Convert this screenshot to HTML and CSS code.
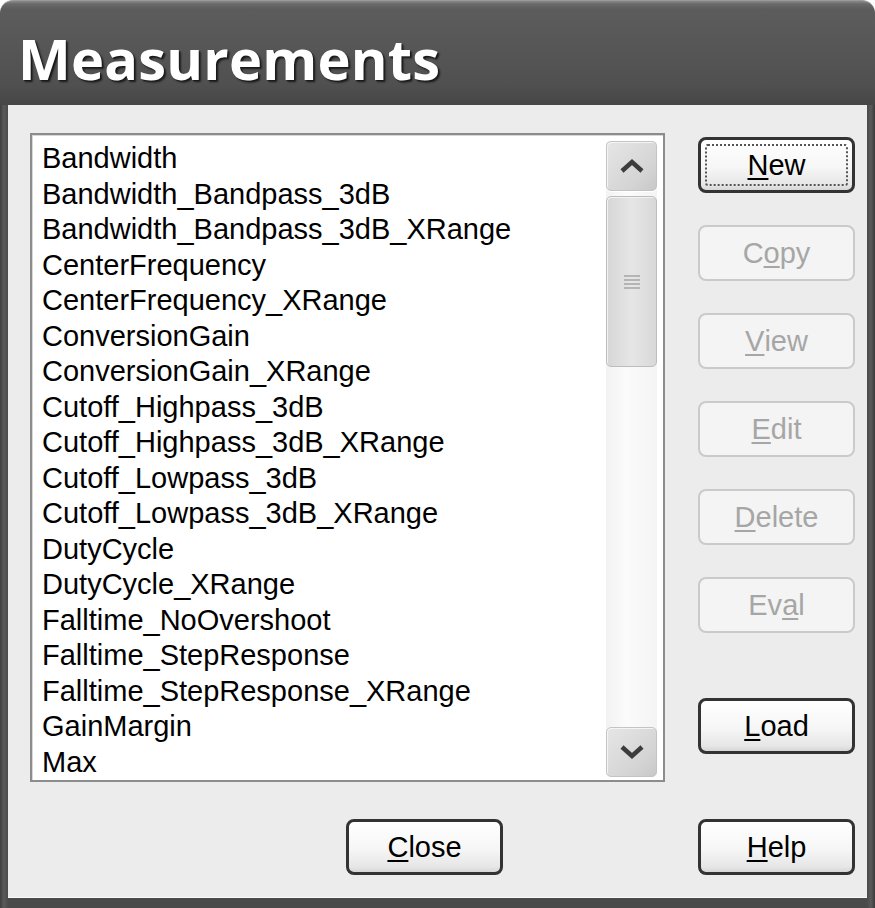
FILE: index.html
```html
<!DOCTYPE html>
<html>
<head>
<meta charset="utf-8">
<link rel="stylesheet" href="styles.css">
</head>
<body>
<div class="window">
  <div class="titlebar"><span class="title">Measurements</span></div>
  <div class="frame">
    <div class="client">
      <div class="listbox">
        <ul class="items">
          <li>Bandwidth</li>
          <li>Bandwidth_Bandpass_3dB</li>
          <li>Bandwidth_Bandpass_3dB_XRange</li>
          <li>CenterFrequency</li>
          <li>CenterFrequency_XRange</li>
          <li>ConversionGain</li>
          <li>ConversionGain_XRange</li>
          <li>Cutoff_Highpass_3dB</li>
          <li>Cutoff_Highpass_3dB_XRange</li>
          <li>Cutoff_Lowpass_3dB</li>
          <li>Cutoff_Lowpass_3dB_XRange</li>
          <li>DutyCycle</li>
          <li>DutyCycle_XRange</li>
          <li>Falltime_NoOvershoot</li>
          <li>Falltime_StepResponse</li>
          <li>Falltime_StepResponse_XRange</li>
          <li>GainMargin</li>
          <li>Max</li>
        </ul>
        <div class="scrollbar">
          <div class="sb-btn">
            <svg width="26" height="16" viewBox="0 0 26 16"><polyline points="3,13 13,4 23,13" fill="none" stroke="#3c3c3c" stroke-width="4.5" stroke-linejoin="miter"/></svg>
          </div>
          <div class="sb-thumb">
            <svg width="18" height="16" viewBox="0 0 18 16"><g stroke="#a9a9a9" stroke-width="1.6"><line x1="1" y1="2" x2="17" y2="2"/><line x1="1" y1="6" x2="17" y2="6"/><line x1="1" y1="10" x2="17" y2="10"/><line x1="1" y1="14" x2="17" y2="14"/></g></svg>
          </div>
          <div class="sb-track"></div>
          <div class="sb-btn">
            <svg width="26" height="16" viewBox="0 0 26 16"><polyline points="3,3 13,12 23,3" fill="none" stroke="#3c3c3c" stroke-width="4.5" stroke-linejoin="miter"/></svg>
          </div>
        </div>
      </div>
      <div class="buttons">
        <div class="btn focus"><span><u>N</u>ew</span></div>
        <div class="btn disabled">C<u>o</u>py</div>
        <div class="btn disabled"><u>V</u>iew</div>
        <div class="btn disabled"><u>E</u>dit</div>
        <div class="btn disabled"><u>D</u>elete</div>
        <div class="btn disabled">Ev<u>a</u>l</div>
        <div class="btn load"><u>L</u>oad</div>
      </div>
      <div class="footer">
        <div class="btn close"><u>C</u>lose</div>
      </div>
      <div class="btn help"><u>H</u>elp</div>
    </div>
  </div>
</div>
</body>
</html>
```

FILE: styles.css
```css
html, body {
  margin: 0;
  padding: 0;
  background: #ffffff;
}

.window {
  width: 875px;
  height: 908px;
  display: flex;
  flex-direction: column;
  overflow: hidden;
}

.titlebar {
  height: 105px;
  box-sizing: border-box;
  padding: 29px 0 0 18px;
  border-radius: 13px 13px 0 0;
  background: linear-gradient(to bottom, #8a8a8a 0px, #6a6a6a 3px, #5c5c5c 8px, #575757 40%, #505050 80%, #464646 100%);
  border-top: 1px solid #9a9a9a;
}

.title {
  display: block;
  font-family: "Open Sans", "DejaVu Sans", sans-serif;
  font-weight: 700;
  font-size: 56px;
  line-height: 56px;
  letter-spacing: 0.2px;
  color: #ffffff;
  text-shadow: 2px 2px 2px #1a1a1a, 1px 1px 0 #2a2a2a;
}

.frame {
  flex: 1;
  background: linear-gradient(to right, #3e3e3e, #5a5a5a 4px, #4a4a4a 8px, #4a4a4a calc(100% - 8px), #5a5a5a calc(100% - 4px), #3a3a3a);
  padding: 0 8px 10px 8px;
  display: flex;
}

.client {
  flex: 1;
  background: #ececec;
  box-sizing: border-box;
  padding: 28px 12px 0 22px;
  display: grid;
  grid-template-columns: 635px 157px;
  grid-template-rows: 649px 56px;
  column-gap: 33px;
  row-gap: 37px;
  border-bottom: 1px solid #fafafa;
}

.listbox {
  border: 2px solid #8c8c8c;
  background: #ffffff;
  display: flex;
  overflow: hidden;
  box-shadow: inset 1px 1px 0 #d8d8d8;
}

.items {
  flex: 1;
  list-style: none;
  margin: 0;
  padding: 6px 0 0 10px;
  overflow: hidden;
  font-family: "Liberation Sans", Arial, sans-serif;
  font-size: 29px;
  line-height: 35.5px;
  color: #000000;
  white-space: nowrap;
}

.scrollbar {
  width: 51px;
  margin: 6px 6px 3px 0;
  display: flex;
  flex-direction: column;
  background: linear-gradient(to right, #f2f2f2, #fbfbfb 40%, #f4f4f4);
  border-radius: 3px;
}

.sb-btn {
  height: 50px;
  box-sizing: border-box;
  border: 1px solid #c4c4c4;
  border-radius: 5px;
  background: linear-gradient(to bottom right, #e6e6e6, #d4d4d4 70%, #c8c8c8);
  box-shadow: inset 1px 1px 0 #f4f4f4, 0 1px 0 #ffffff;
  display: flex;
  align-items: center;
  justify-content: center;
}

.sb-thumb {
  margin-top: 5px;
  height: 171px;
  box-sizing: border-box;
  border: 1px solid #bdbdbd;
  border-radius: 5px;
  background: linear-gradient(to right, #d6d6d6, #e6e6e6 50%, #d8d8d8);
  box-shadow: inset 1px 1px 0 #f2f2f2;
  display: flex;
  align-items: center;
  justify-content: center;
}

.sb-track {
  flex: 1;
}

.buttons {
  display: flex;
  flex-direction: column;
  padding-top: 4px;
  gap: 32px;
}

.btn {
  height: 56px;
  box-sizing: border-box;
  border: 3px solid #333333;
  border-radius: 8px;
  background: linear-gradient(to bottom, #ffffff, #f6f6f6 55%, #e6e6e6 90%, #d6d6d6);
  display: flex;
  align-items: center;
  justify-content: center;
  font-family: "Liberation Sans", Arial, sans-serif;
  font-size: 29px;
  color: #000000;
  position: relative;
}

.btn u {
  text-decoration-thickness: 2px;
  text-underline-offset: 3px;
}

.btn.focus::after {
  content: "";
  position: absolute;
  inset: 4px;
  border: 2px dotted #555555;
  border-radius: 3px;
}

.btn.disabled {
  border: 2px solid #cacaca;
  background: #f4f4f4;
  color: #a6a6a6;
}

.btn.load {
  margin-top: 33px;
}

.footer {
  display: flex;
}

.btn.close {
  width: 157px;
  margin-left: 316px;
}
```
